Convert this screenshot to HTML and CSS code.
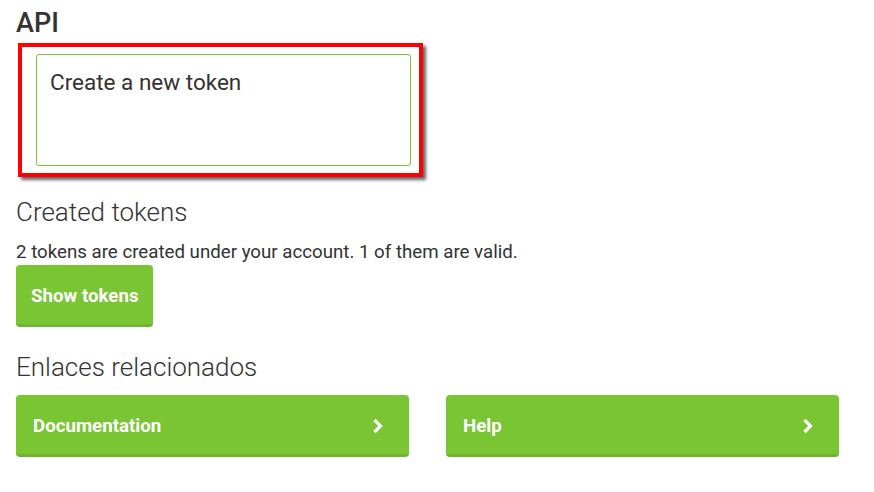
FILE: index.html
```html
<!DOCTYPE html>
<html>
<head>
<meta charset="utf-8">
<link rel="stylesheet" href="styles.css">
</head>
<body>
<div class="page">
  <h1 class="title">API</h1>
  <div class="highlight">
    <a class="newToken" href="#">Create a new token</a>
  </div>

  <h2 class="section">Created tokens</h2>
  <p class="info">2 tokens are created under your account. 1 of them are valid.</p>
  <a class="btn" href="#">Show tokens</a>

  <h2 class="section related">Enlaces relacionados</h2>
  <div class="links">
    <a class="linkBtn" href="#"><span>Documentation</span><svg width="12" height="16" viewBox="0 0 12 16"><path d="M2.5 2 L8.5 8 L2.5 14" fill="none" stroke="#fff" stroke-width="3.2"/></svg></a>
    <a class="linkBtn" href="#"><span>Help</span><svg width="12" height="16" viewBox="0 0 12 16"><path d="M2.5 2 L8.5 8 L2.5 14" fill="none" stroke="#fff" stroke-width="3.2"/></svg></a>
  </div>
</div>
</body>
</html>
```
FILE: styles.css
```css
body {
	margin: 0;
	background: #fff;
	color: #333;
	font-family: Roboto, "Liberation Sans", sans-serif;
}
.page {
	padding: 4px 16px 0 16px;
}
.title {
	margin: 0;
	font-size: 27px;
	font-weight: 500;
	line-height: 38px;
	color: #333;
}
.highlight {
	width: 375px;
	margin: 1px 0 0 2px;
	padding: 7px 8px 7px 14px;
	border: 4px solid #f00;
	box-shadow: 3px 3px 3px rgba(0,0,0,0.6);
}
.newToken {
	display: block;
	height: 112px;
	box-sizing: border-box;
	padding: 14px 13px;
	border: 1px solid #7ac534;
	border-radius: 3px;
	color: #333;
	text-decoration: none;
	font-size: 22.5px;
	line-height: 26px;
}
.section {
	margin: 20px 0 0 0;
	font-size: 26px;
	font-weight: 300;
	line-height: 30px;
	color: #333;
}
.info {
	margin: 14px 0 0 0;
	font-size: 18.7px;
	line-height: 22px;
}
.btn {
	display: inline-block;
	margin-top: 2px;
	padding: 0 15px;
	height: 62px;
	line-height: 62px;
	box-sizing: border-box;
	background: #7ac534;
	border-bottom: 3px solid #6fb52f;
	border-radius: 4px;
	color: #fff;
	font-weight: 700;
	font-size: 18.7px;
	text-decoration: none;
}
.related {
	margin-top: 25px;
}
.links {
	display: flex;
	gap: 37px;
	margin-top: 13px;
}
.linkBtn {
	display: flex;
	align-items: center;
	justify-content: space-between;
	width: 393px;
	height: 62px;
	box-sizing: border-box;
	padding: 3px 25px 0 17px;
	background: #7ac534;
	border-bottom: 3px solid #6fb52f;
	border-radius: 4px;
	color: #fff;
	font-weight: 700;
	font-size: 18.7px;
	text-decoration: none;
}
```
